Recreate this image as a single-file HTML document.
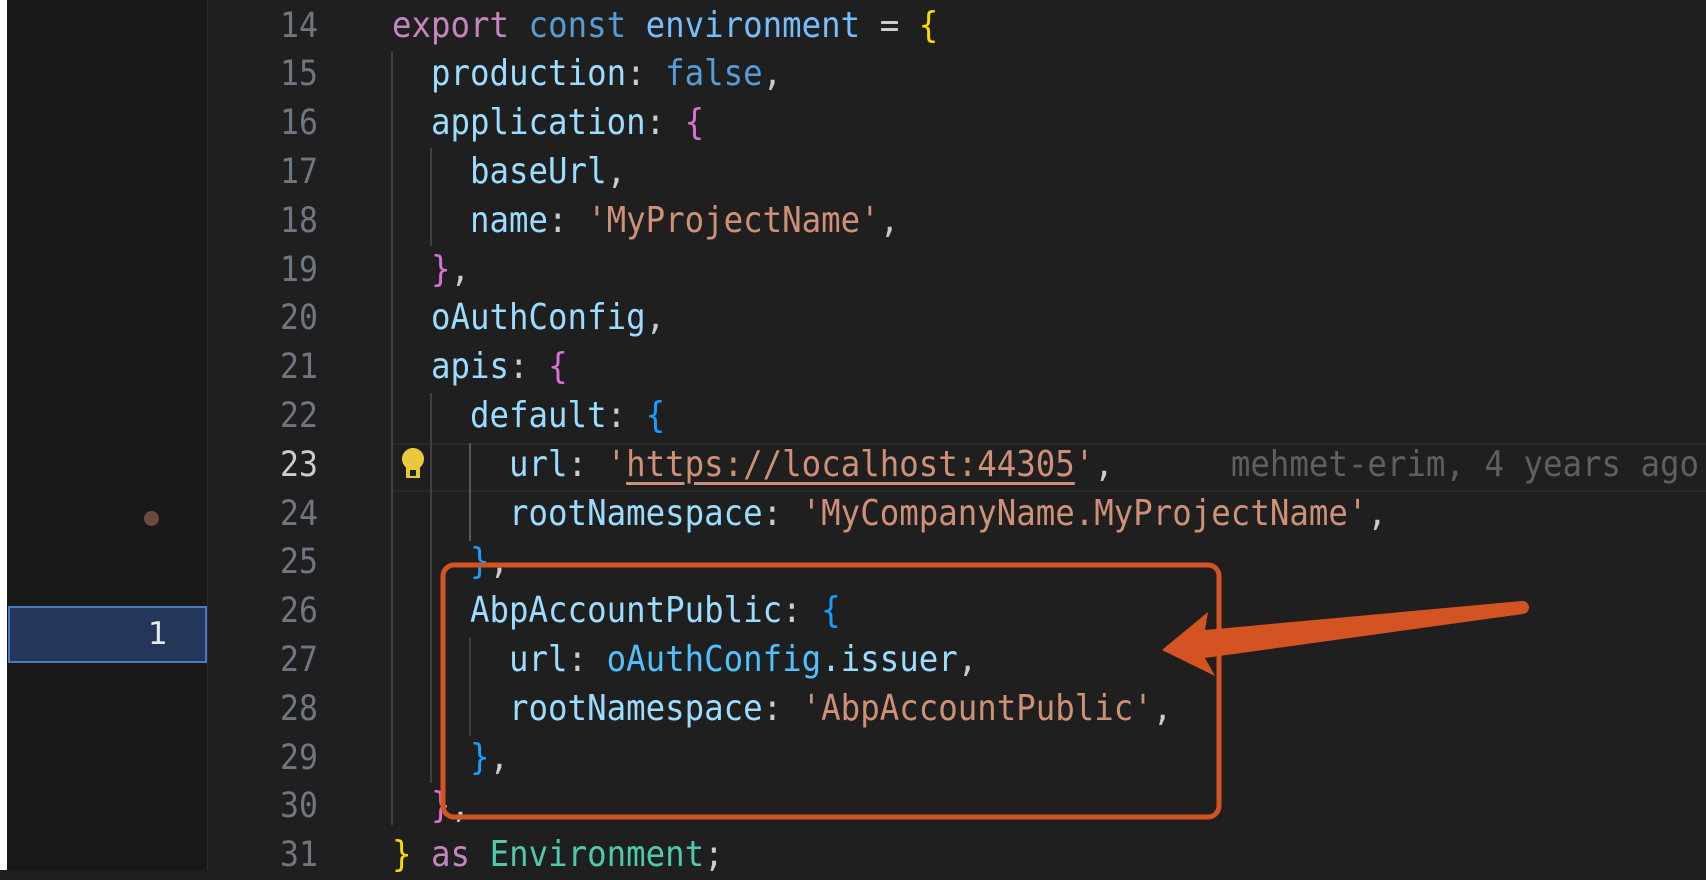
<!DOCTYPE html>
<html><head><meta charset="utf-8"><style>
html,body{margin:0;padding:0;width:1706px;height:870px;overflow:hidden;background:#1f1f1f;}
.side{position:absolute;left:0;top:0;width:207px;height:870px;background:#181818;border-right:1px solid #2b2b2b;}
.white{position:absolute;left:0;top:0;width:7px;height:870px;background:#fff;}
.ln{position:absolute;left:208px;width:110px;text-align:right;font:35px "DejaVu Sans Mono",monospace;color:#6e7681;height:48.8px;line-height:48.8px;transform:scaleX(0.9);transform-origin:right center;}
.code{position:absolute;left:392px;font:36px "DejaVu Sans Mono",monospace;color:#9cdcfe;height:48.8px;line-height:48.8px;white-space:pre;transform:scaleX(0.9);transform-origin:left center;}
.k{color:#c586c0}.b{color:#569cd6}.s{color:#ce9178}.y{color:#ffd700}.p{color:#da70d6}.bl{color:#179fff}.w{color:#cccccc}.t{color:#4ec9b0}.c{color:#4fc1ff}
.g{position:absolute;width:2px;background:#404040;}
</style></head><body>
<div class="side"></div><div class="white"></div>
<div style="position:absolute;left:392px;top:443px;width:1314px;height:49px;border-top:2px solid #282828;border-bottom:2px solid #282828;box-sizing:border-box"></div>
<div style="position:absolute;left:8px;top:606px;width:199px;height:57px;background:#24365a;border:2px solid #4a78c8;box-sizing:border-box"></div>
<div style="position:absolute;left:148px;top:609px;font:31px 'DejaVu Sans',sans-serif;color:#e8e8e8;line-height:50px">1</div>
<div style="position:absolute;left:144px;top:511px;width:15px;height:15px;border-radius:50%;background:#6b4a3e"></div>
<div class="g" style="left:391px;top:51px;height:774px"></div>
<div class="g" style="left:430px;top:148px;height:98px"></div>
<div class="g" style="left:430px;top:393px;height:390px"></div>
<div class="g" style="left:469px;top:443px;height:98px;background:#585858"></div>
<div class="g" style="left:469px;top:638px;height:98px"></div>
<svg style="position:absolute;left:398px;top:446px" width="30" height="36" viewBox="0 0 30 36"><path d="M15 2a11 11 0 0 0-7 19.5V32h14V21.5A11 11 0 0 0 15 2z" fill="#e8c93b"/><rect x="12" y="24" width="6" height="6" fill="#1f1f1f"/></svg>
<div class="ln" style="top:1.6px">14</div><div class="ln" style="top:50.4px">15</div><div class="ln" style="top:99.2px">16</div><div class="ln" style="top:148px">17</div><div class="ln" style="top:196.8px">18</div><div class="ln" style="top:245.6px">19</div><div class="ln" style="top:294.4px">20</div><div class="ln" style="top:343.2px">21</div><div class="ln" style="top:392px">22</div><div class="ln" style="top:440.8px;color:#ccc">23</div><div class="ln" style="top:489.6px">24</div><div class="ln" style="top:538.4px">25</div><div class="ln" style="top:587.2px">26</div><div class="ln" style="top:636px">27</div><div class="ln" style="top:684.8px">28</div><div class="ln" style="top:733.6px">29</div><div class="ln" style="top:782.4px">30</div><div class="ln" style="top:831.2px">31</div>
<div class="code" style="top:1.6px"><span class="k">export</span> <span class="b">const</span> <span style="color:#75beff">environment</span> <span class="w">=</span> <span class="y">{</span></div>
<div class="code" style="top:50.4px">  production<span class="w">:</span> <span class="b">false</span><span class="w">,</span></div>
<div class="code" style="top:99.2px">  application<span class="w">:</span> <span class="p">{</span></div>
<div class="code" style="top:148px">    baseUrl<span class="w">,</span></div>
<div class="code" style="top:196.8px">    name<span class="w">:</span> <span class="s">'MyProjectName'</span><span class="w">,</span></div>
<div class="code" style="top:245.6px">  <span class="p">}</span><span class="w">,</span></div>
<div class="code" style="top:294.4px">  oAuthConfig<span class="w">,</span></div>
<div class="code" style="top:343.2px">  apis<span class="w">:</span> <span class="p">{</span></div>
<div class="code" style="top:392px">    default<span class="w">:</span> <span class="bl">{</span></div>
<div class="code" style="top:440.8px">      url<span class="w">:</span> <span class="s">'<span style="text-decoration:underline;text-underline-offset:6px">https://localhost:44305</span>'</span><span class="w">,</span>      <span style="color:#5f5f5f">mehmet-erim, 4 years ago</span></div>
<div class="code" style="top:489.6px">      rootNamespace<span class="w">:</span> <span class="s">'MyCompanyName.MyProjectName'</span><span class="w">,</span></div>
<div class="code" style="top:538.4px">    <span class="bl">}</span><span class="w">,</span></div>
<div class="code" style="top:587.2px">    AbpAccountPublic<span class="w">:</span> <span class="bl">{</span></div>
<div class="code" style="top:636px">      url<span class="w">:</span> <span class="c">oAuthConfig</span>.issuer<span class="w">,</span></div>
<div class="code" style="top:684.8px">      rootNamespace<span class="w">:</span> <span class="s">'AbpAccountPublic'</span><span class="w">,</span></div>
<div class="code" style="top:733.6px">    <span class="bl">}</span><span class="w">,</span></div>
<div class="code" style="top:782.4px">  <span class="p">}</span><span class="w">,</span></div>
<div class="code" style="top:831.2px"><span class="y">}</span> <span class="k">as</span> <span class="t">Environment</span><span class="w">;</span></div>
<svg style="position:absolute;left:0;top:0" width="1706" height="870">
<rect x="443" y="565" width="776" height="252" rx="11" fill="none" stroke="#d35322" stroke-width="5"/>
<path d="M1205 630 L1522 601 A6 6 0 0 1 1523 614 L1205 658 L1215 676 L1162 650 L1208 612 Z" fill="#d35322"/>
</svg>
</body></html>
